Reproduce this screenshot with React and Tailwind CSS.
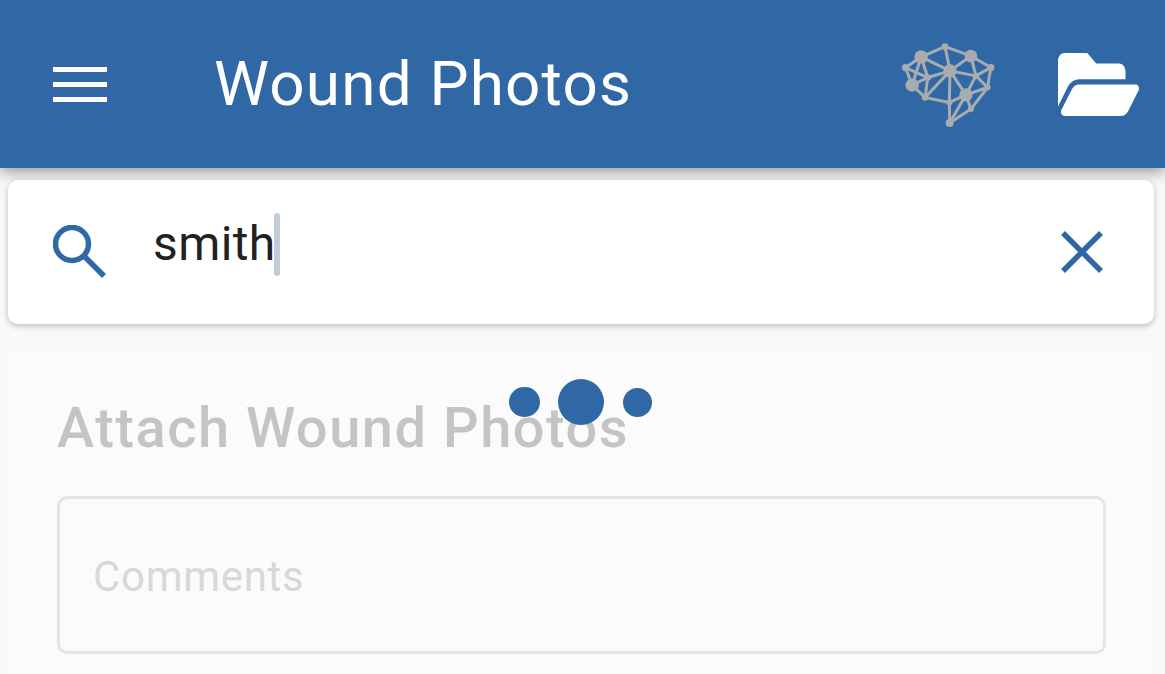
import React from 'react';

const nodes = [
  [78, 110, 11], [125, 78, 20], [197, 47, 10], [275, 75, 19], [335, 110, 11],
  [212, 120, 20], [98, 163, 20], [145, 140, 10], [290, 135, 9], [260, 192, 20],
  [325, 170, 9], [137, 200, 10], [210, 215, 9], [275, 235, 9], [211, 277, 12],
];

const edges = [
  [0, 1], [1, 2], [2, 3], [3, 4], [0, 6], [1, 6], [1, 5], [1, 7], [2, 5], [3, 5],
  [3, 8], [4, 8], [4, 10], [5, 7], [5, 8], [5, 9], [5, 11], [5, 12], [6, 7], [6, 11],
  [7, 11], [8, 9], [8, 10], [9, 10], [9, 12], [9, 13], [9, 14], [10, 13], [11, 12],
  [12, 14], [13, 14], [0, 7],
];

const BrainLogo = () => (
  <svg viewBox="65 30 285 265" className="w-[95px] h-[88px]">
    {edges.map(([a, b], i) => (
      <line key={i} x1={nodes[a][0]} y1={nodes[a][1]} x2={nodes[b][0]} y2={nodes[b][1]} stroke="#a9acaf" strokeWidth="9" />
    ))}
    {nodes.map(([x, y, r], i) => (
      <circle key={i} cx={x} cy={y} r={r} fill="#a9acaf" />
    ))}
  </svg>
);

const FolderOpen = () => (
  <svg viewBox="0 64 576 384" preserveAspectRatio="none" className="w-[81px] h-[63px]" fill="#ffffff">
    <path d="M572.694 292.093L500.27 416.248A63.997 63.997 0 0 1 444.989 448H45.025c-18.523 0-30.064-20.093-20.731-36.093l72.424-124.155A64 64 0 0 1 152 256h399.964c18.523 0 30.064 20.093 20.73 36.093zM152 224h328v-48c0-26.51-21.49-48-48-48H272l-64-64H48C21.49 64 0 85.49 0 112v278.046l69.077-118.418C86.214 242.25 117.989 224 152 224z" />
  </svg>
);

const MenuIcon = () => (
  <div className="flex flex-col gap-[10px] w-[54px]">
    <div className="h-[5px] bg-white" />
    <div className="h-[5px] bg-white" />
    <div className="h-[5px] bg-white" />
  </div>
);

const SearchIcon = () => (
  <svg viewBox="0 0 54 54" className="w-[54px] h-[54px]" fill="none" stroke="#3068a5" strokeWidth="5.5">
    <circle cx="19" cy="19" r="16.5" />
    <line x1="31" y1="31" x2="51" y2="51" />
  </svg>
);

const CloseIcon = () => (
  <svg viewBox="0 0 42 42" className="w-[42px] h-[42px]" fill="none" stroke="#3068a5" strokeWidth="5.5">
    <line x1="2" y1="2" x2="40" y2="40" />
    <line x1="40" y1="2" x2="2" y2="40" />
  </svg>
);

export default function App() {
  return (
    <div className="relative w-[1165px] h-[674px] overflow-hidden bg-[#f9f9f9] font-['Roboto',sans-serif]">
      <header className="relative z-10 h-[168px] bg-[#3068a5] flex items-center pl-[53px] pr-[26px] shadow-[0_4px_14px_rgba(0,0,0,0.4)]">
        <MenuIcon />
        <h1 className="ml-[107px] flex-1 text-[62px] leading-none text-white tracking-[1.2px]">Wound Photos</h1>
        <div className="mr-[62px] mt-[1px]">
          <BrainLogo />
        </div>
        <FolderOpen />
      </header>

      <div className="relative z-10 mt-3 ml-2 mr-[11px] h-36 bg-white rounded-[10px] shadow-[0_2px_6px_rgba(0,0,0,0.25)] flex items-center pl-[45px] pr-[51px]">
        <SearchIcon />
        <div className="ml-[46px] flex-1 flex items-center mb-[16px]">
          <span className="text-[48px] leading-none text-[#212121] tracking-[0.4px]">smith</span>
          <span className="-ml-[2px] w-[6px] h-[63px] rounded-[3px] bg-[#c3cbd9]" />
        </div>
        <CloseIcon />
      </div>

      <div className="mt-[25px] ml-2 mr-[11px] h-[340px] bg-[#fbfbfb] rounded-[10px] pt-[46px] pl-[49px] pr-[48px]">
        <h2 className="text-[56px] leading-[66px] font-medium text-[#c4c4c4] tracking-[1.5px]">Attach Wound Photos</h2>
        <div className="mt-[35px] h-[158px] border-[3px] border-[#e5e5e5] rounded-[10px] flex items-center pl-[33px]">
          <span className="text-[42px] leading-none text-[#d8d8d8] tracking-[0.7px] mt-[3px]">Comments</span>
        </div>
      </div>

      <div className="absolute z-20 left-[509px] top-[379px] flex items-center">
        <div className="w-[31px] h-[30px] rounded-full bg-[#2f68a4]" />
        <div className="ml-[18px] w-[46px] h-[46px] rounded-full bg-[#2f68a4]" />
        <div className="ml-[19px] w-[29px] h-[29px] rounded-full bg-[#2f68a4]" />
      </div>
    </div>
  );
}
